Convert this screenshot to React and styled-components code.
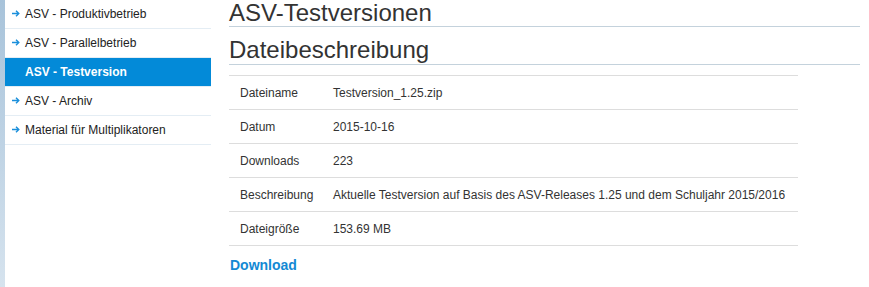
import styled, { createGlobalStyle } from "styled-components";

const GlobalStyle = createGlobalStyle`
  html, body {
    margin: 0;
    padding: 0;
    background: #fff;
  }
  body {
    font-family: "Liberation Sans", Arial, sans-serif;
    color: #333;
  }
`;

const Page = styled.div`
  display: flex;
  min-height: 287px;
`;

const Strip = styled.div`
  width: 5px;
  flex-shrink: 0;
  background: linear-gradient(to bottom, #a8c3da 0%, #c3d6e6 60%, #d6e3ee 100%);
`;

const Sidebar = styled.nav`
  width: 206px;
  flex-shrink: 0;
`;

const NavItem = styled.a`
  display: flex;
  align-items: center;
  height: 28px;
  padding-left: ${(p) => (p.$active ? "20px" : "7px")};
  border-bottom: 1px solid #e4edf4;
  font-size: 12px;
  font-weight: ${(p) => (p.$active ? "bold" : "normal")};
  color: ${(p) => (p.$active ? "#fff" : "#222")};
  background: ${(p) => (p.$active ? "#038ad8" : "transparent")};
  text-decoration: none;
`;

const Arrow = styled.svg`
  width: 8px;
  height: 7px;
  margin-right: 5px;
  margin-top: -1px;
  flex-shrink: 0;
`;

const Main = styled.main`
  margin-left: 18px;
  width: 631px;
`;

const Title = styled.h1`
  margin: 0;
  font-size: 24px;
  font-weight: normal;
  line-height: 26px;
  color: #333;
  border-bottom: 1px solid #c4d2dc;
`;

const SubTitle = styled.h2`
  margin: 10px 0 0;
  font-size: 24px;
  font-weight: normal;
  line-height: 26px;
  padding-bottom: 1px;
  color: #333;
  border-bottom: 1px solid #c4d2dc;
`;

const Table = styled.div`
  width: 569px;
  margin-top: 10px;
  border-top: 1px solid #ddd;
`;

const Row = styled.div`
  display: flex;
  align-items: center;
  height: 33px;
  border-bottom: 1px solid #ddd;
  font-size: 12px;
  color: #333;
`;

const Label = styled.div`
  width: 93px;
  padding-left: 11px;
  flex-shrink: 0;
`;

const Value = styled.div`
  flex: 1;
`;

const DownloadLink = styled.a`
  display: inline-block;
  margin-top: 9px;
  margin-left: 1px;
  font-size: 14px;
  line-height: 20px;
  font-weight: bold;
  color: #1389d4;
  text-decoration: none;
`;

const navItems = [
  "ASV - Produktivbetrieb",
  "ASV - Parallelbetrieb",
  "ASV - Testversion",
  "ASV - Archiv",
  "Material für Multiplikatoren",
];

const details = [
  ["Dateiname", "Testversion_1.25.zip"],
  ["Datum", "2015-10-16"],
  ["Downloads", "223"],
  ["Beschreibung", "Aktuelle Testversion auf Basis des ASV-Releases 1.25 und dem Schuljahr 2015/2016"],
  ["Dateigröße", "153.69 MB"],
];

const App = () => {
  return (
    <>
      <GlobalStyle />
      <Page>
        <Strip />
        <Sidebar>
          {navItems.map((item) => {
            const active = item === "ASV - Testversion";
            return (
              <NavItem key={item} href="#" $active={active}>
                {!active && (
                  <Arrow viewBox="0 0 8 7">
                    <path d="M0 3.5 H6.5 M4 0.8 L6.8 3.5 L4 6.2" stroke="#1a8fdb" strokeWidth="1.4" fill="none" />
                  </Arrow>
                )}
                {item}
              </NavItem>
            );
          })}
        </Sidebar>
        <Main>
          <Title>ASV-Testversionen</Title>
          <SubTitle>Dateibeschreibung</SubTitle>
          <Table>
            {details.map(([label, value]) => (
              <Row key={label}>
                <Label>{label}</Label>
                <Value>{value}</Value>
              </Row>
            ))}
          </Table>
          <DownloadLink href="#">Download</DownloadLink>
        </Main>
      </Page>
    </>
  );
};

export default App;
